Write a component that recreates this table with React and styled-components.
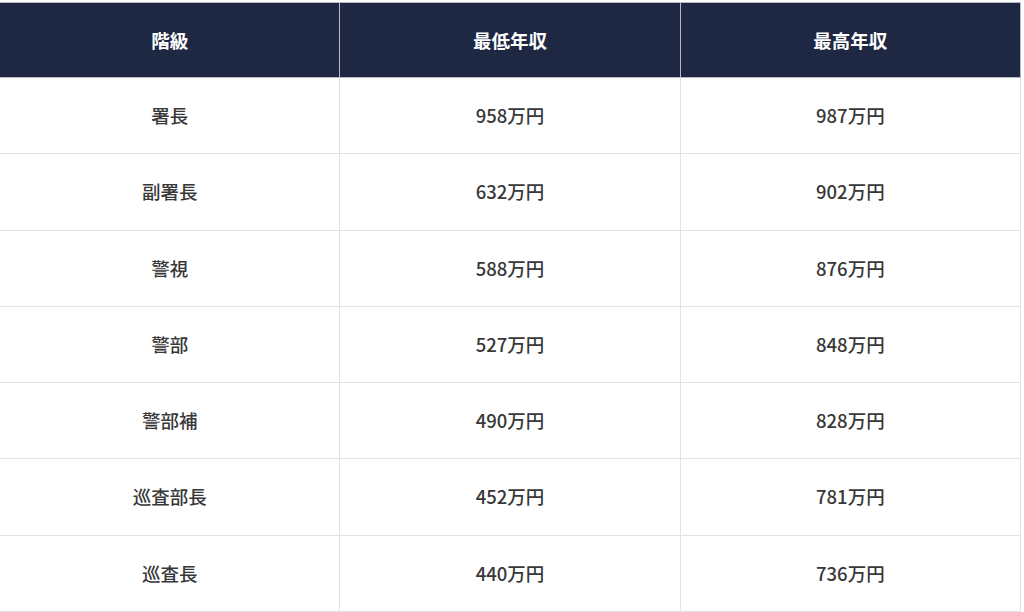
import React from "react";
import styled, { createGlobalStyle } from "styled-components";

const Global = createGlobalStyle`
  html, body { margin: 0; padding: 0; background: #fff; }
  body { font-family: "Noto Sans CJK JP", "Noto Sans", sans-serif; overflow: hidden; }
`;

const Wrap = styled.div`
  padding-top: 2px;
  margin-left: -1px;
  width: 1022px;
`;

const Table = styled.table`
  width: 100%;
  border-collapse: collapse;
  table-layout: fixed;
  border: 1px solid #dcdcdc;
`;

const Th = styled.th`
  background: #1e2842;
  color: #fff;
  font-weight: 700;
  font-size: 18.5px;
  line-height: 24px;
  padding: 25px 8px;
  text-align: center;
  border: 1px solid #b7bac2;
`;

const Td = styled.td`
  color: #383838;
  font-weight: 500;
  font-size: 18.5px;
  line-height: 25.3px;
  padding: 25px 8px;
  text-align: center;
  border: 1px solid #e2e2e2;
`;

const rows = [
  ["署長", "958万円", "987万円"],
  ["副署長", "632万円", "902万円"],
  ["警視", "588万円", "876万円"],
  ["警部", "527万円", "848万円"],
  ["警部補", "490万円", "828万円"],
  ["巡査部長", "452万円", "781万円"],
  ["巡査長", "440万円", "736万円"],
];

export default function App() {
  return (
    <>
      <Global />
      <Wrap>
        <Table>
          <thead>
            <tr>
              <Th>階級</Th>
              <Th>最低年収</Th>
              <Th>最高年収</Th>
            </tr>
          </thead>
          <tbody>
            {rows.map((r) => (
              <tr key={r[0]}>
                {r.map((c, i) => (
                  <Td key={i}>{c}</Td>
                ))}
              </tr>
            ))}
          </tbody>
        </Table>
      </Wrap>
    </>
  );
}
